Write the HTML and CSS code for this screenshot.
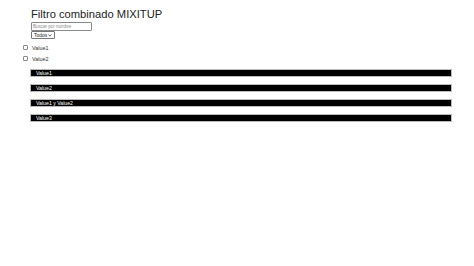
FILE: index.html
```html
<!DOCTYPE html>
<html lang="es">
<head>
<meta charset="utf-8">
<title>Filtro combinado MIXITUP</title>
<link rel="stylesheet" href="styles.css">
</head>
<body>
<div class="page">
  <h1 class="title">Filtro combinado MIXITUP</h1>
  <div class="controls">
    <input class="search" type="text" placeholder="Buscar por nombre">
    <span class="select-wrap">
      <select class="select"><option>Todos</option></select>
      <svg class="chev" viewBox="0 0 6 4" width="4" height="3"><path d="M0.7 0.8 L3 3 L5.3 0.8" fill="none" stroke="#222" stroke-width="1.1"/></svg>
    </span>
  </div>
  <div class="checks">
    <label class="check"><span class="box"></span>Value1</label>
    <label class="check"><span class="box"></span>Value2</label>
  </div>
  <div class="items">
    <div class="item">Value1</div>
    <div class="item">Value2</div>
    <div class="item">Value1 y Value2</div>
    <div class="item">Value3</div>
  </div>
</div>
</body>
</html>
```
FILE: styles.css
```css
html, body {
  margin: 0;
  padding: 0;
  background: #fff;
}
body {
  font-family: "Liberation Sans", Arial, sans-serif;
  color: #222;
}
.page {
  padding: 7px 22px 0 23px;
}
.title {
  margin: 0 0 0 8px;
  font-size: 11.2px;
  font-weight: normal;
  line-height: 14px;
  color: #222;
}
.controls {
  margin: 1px 0 0 8px;
  display: flex;
  flex-direction: column;
  align-items: flex-start;
}
.search {
  box-sizing: border-box;
  width: 61px;
  height: 9px;
  margin: 0;
  padding: 0 1px;
  border: 1px solid #8a8a8a;
  border-radius: 1px;
  font-family: "Liberation Sans", Arial, sans-serif;
  font-size: 4.5px;
  color: #333;
  outline: none;
}
.search::placeholder {
  color: #8a8a8a;
}
.select-wrap {
  position: relative;
  display: block;
  width: 24px;
  height: 8px;
}
.select {
  -webkit-appearance: none;
  appearance: none;
  box-sizing: border-box;
  display: block;
  width: 24px;
  height: 8px;
  margin: 0;
  padding: 0 0 0 2px;
  border: 1px solid #777;
  border-radius: 1px;
  background: #fff;
  font-family: "Liberation Sans", Arial, sans-serif;
  font-size: 5px;
  line-height: 6px;
  color: #222;
}
.chev {
  position: absolute;
  right: 3px;
  top: 3px;
}
.checks {
  margin-top: 5px;
  display: flex;
  flex-direction: column;
  gap: 4px;
}
.check {
  display: flex;
  align-items: center;
  gap: 4px;
  height: 7px;
  font-size: 5.4px;
  color: #333;
}
.box {
  box-sizing: border-box;
  width: 5px;
  height: 5px;
  border: 1px solid #888;
  border-radius: 1px;
  background: #fff;
}
.items {
  margin: 7px 0 0 7px;
  display: flex;
  flex-direction: column;
  gap: 7px;
}
.item {
  box-sizing: border-box;
  height: 8px;
  padding-left: 5px;
  background: #000;
  border: 1px solid #bbb;
  color: #fff;
  font-size: 5.2px;
  line-height: 6px;
}
```
